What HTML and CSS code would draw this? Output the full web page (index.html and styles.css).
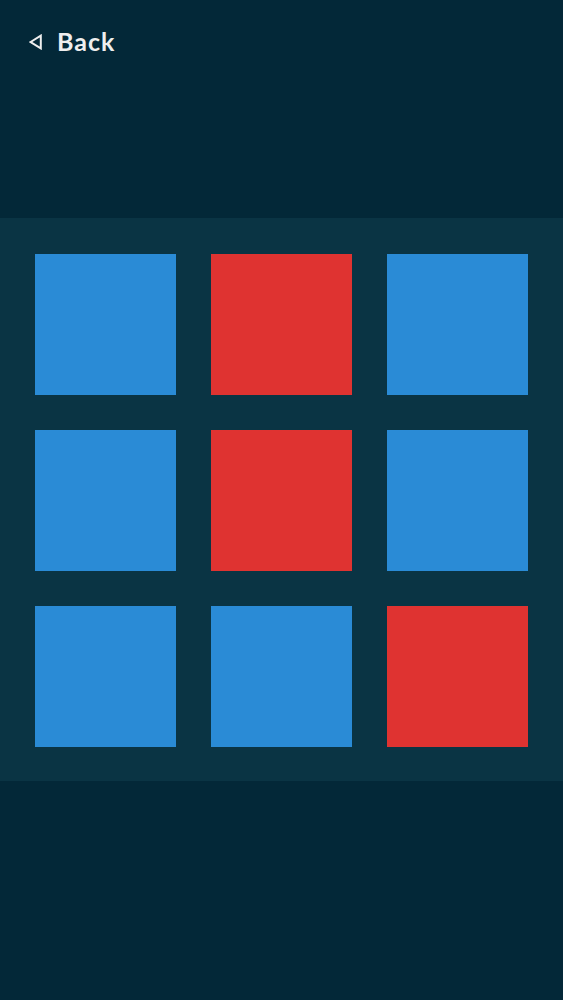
FILE: index.html
```html
<!DOCTYPE html>
<html>
<head>
<meta charset="utf-8">
<link rel="stylesheet" href="styles.css">
</head>
<body>
<div class="screen">
  <header class="topbar">
    <a class="back">
      <svg class="back-icon" width="13" height="16" viewBox="0 0 13 16"><path d="M1.6 8 L11.8 1.6 L11.8 14.4 Z" fill="none" stroke="#eeeeee" stroke-width="2" stroke-linejoin="miter"/></svg>
      <span class="back-text">Back</span>
    </a>
  </header>
  <section class="board">
    <div class="grid">
      <div class="tile blue"></div>
      <div class="tile red"></div>
      <div class="tile blue"></div>
      <div class="tile blue"></div>
      <div class="tile red"></div>
      <div class="tile blue"></div>
      <div class="tile blue"></div>
      <div class="tile blue"></div>
      <div class="tile red"></div>
    </div>
  </section>
</div>
</body>
</html>
```
FILE: styles.css
```css
html, body {
  margin: 0;
  padding: 0;
  background: #032838;
}
.screen {
  width: 563px;
  height: 1000px;
  background: #032838;
  display: flex;
  flex-direction: column;
}
.topbar {
  height: 218px;
  box-sizing: border-box;
  padding: 26px 0 0 29px;
}
.back {
  display: flex;
  align-items: center;
  gap: 15px;
  color: #eeeeee;
  font-family: Lato, "Open Sans", sans-serif;
  font-weight: 700;
  font-size: 25px;
  letter-spacing: 1px;
  line-height: 30px;
}
.back-icon {
  display: block;
  margin-top: 2px;
}
.board {
  background: #0a3444;
  height: 563px;
  box-sizing: border-box;
  padding: 36px 35px;
}
.grid {
  display: grid;
  grid-template-columns: repeat(3, 141px);
  grid-template-rows: repeat(3, 141px);
  gap: 35px;
}
.tile.blue { background: #2a8bd6; }
.tile.red { background: #df3331; }
```
